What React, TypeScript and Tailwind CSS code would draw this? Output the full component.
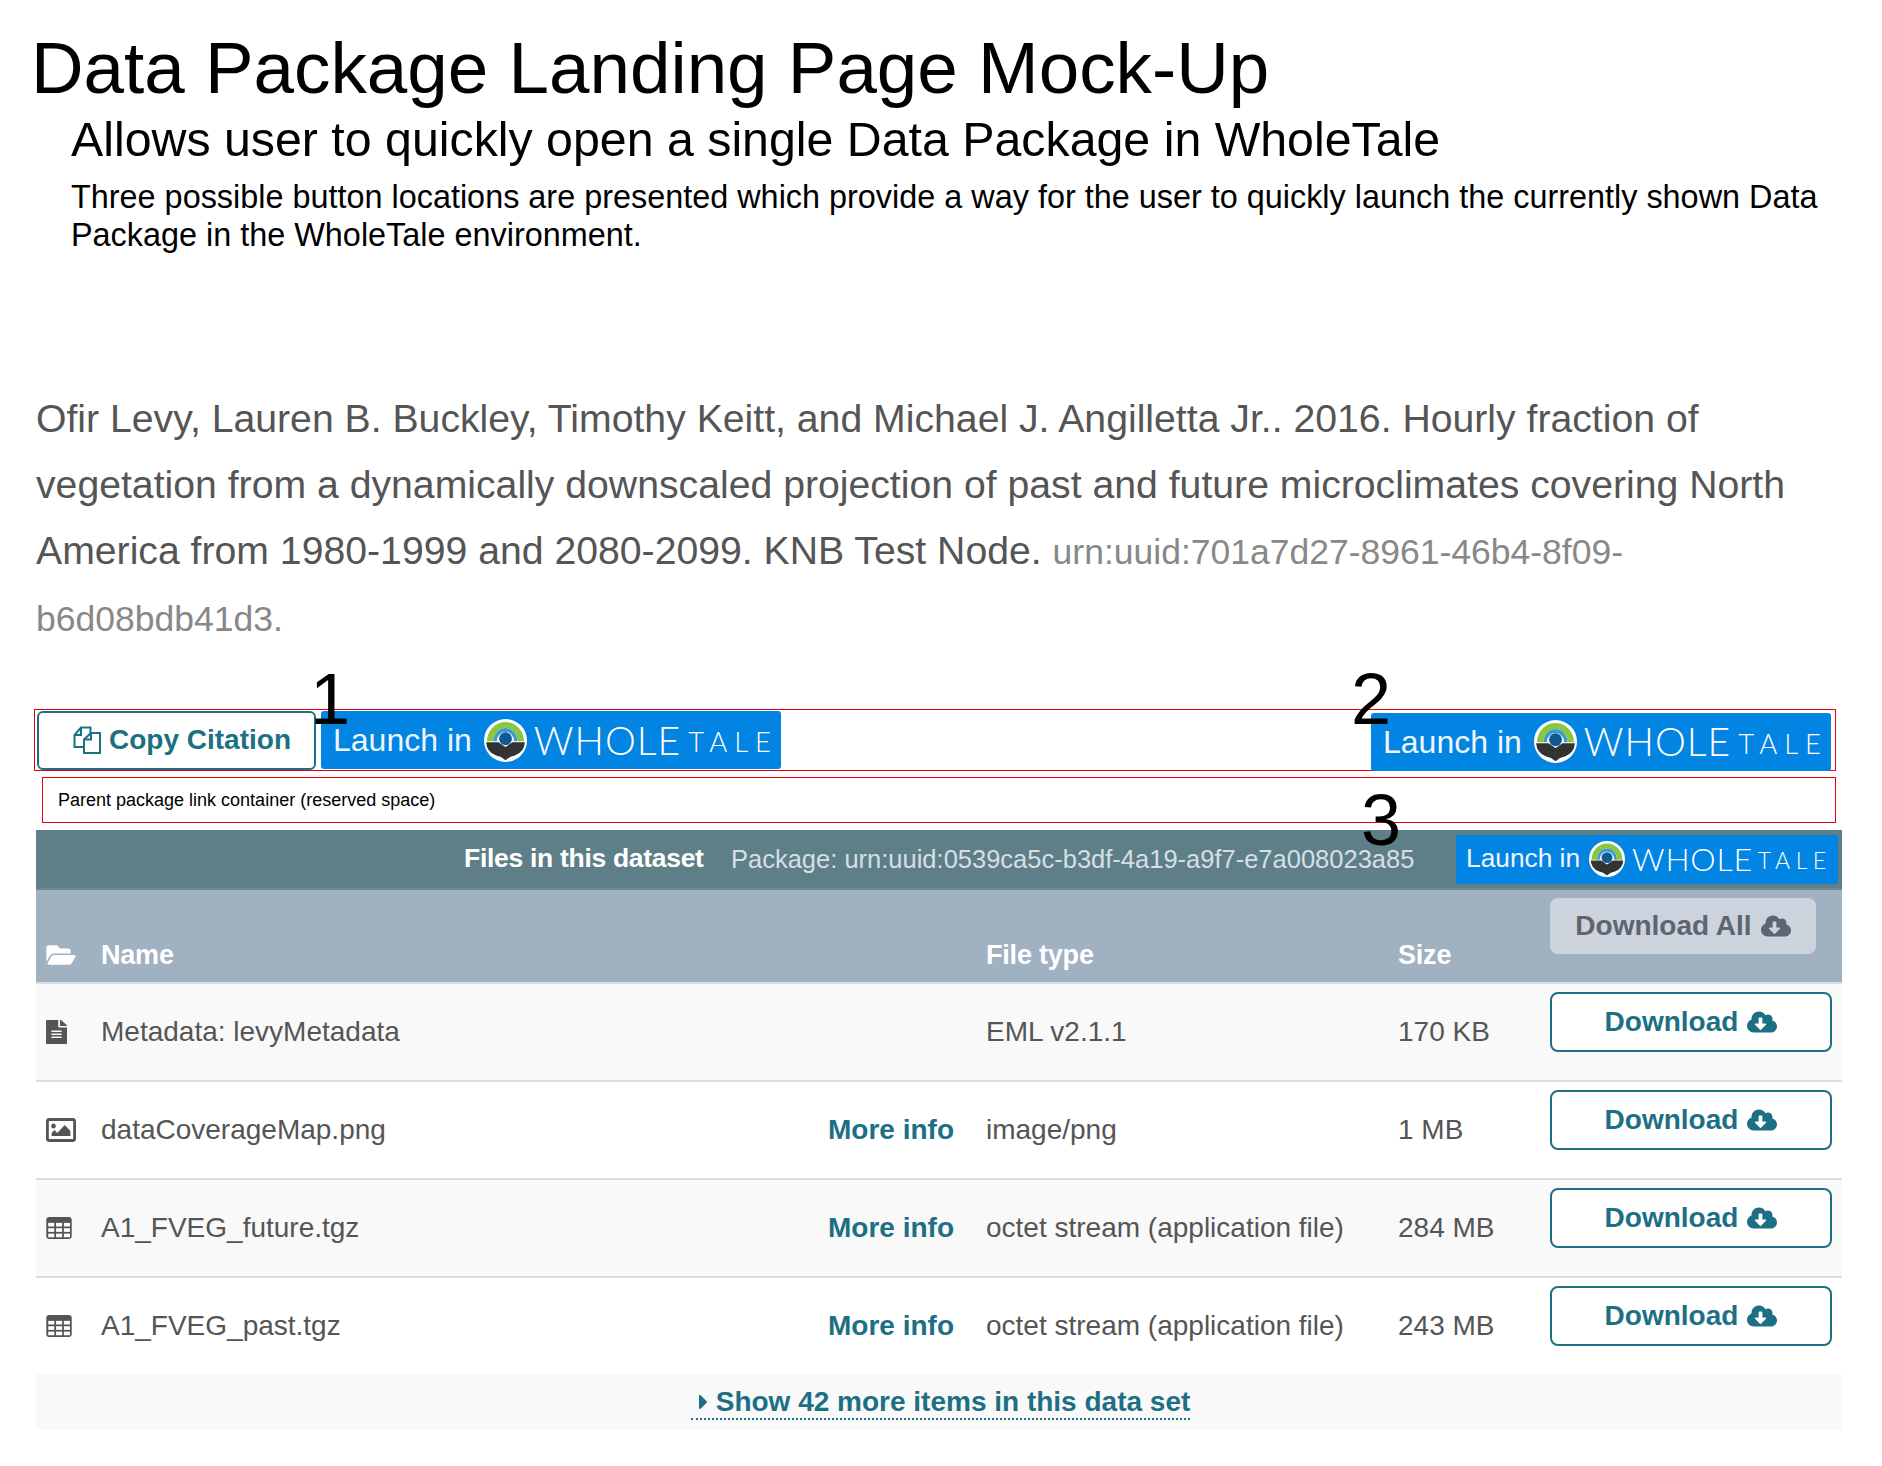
import { FaFolderOpen, FaFileAlt, FaRegImage, FaCloudDownloadAlt, FaCaretRight } from "react-icons/fa";

function Logo({ className }: { className: string }) {
  return (
    <svg viewBox="0 0 100 100" className={className}>
      <circle cx="50" cy="50" r="50" fill="#fff" />
      <path d="M7 52 A43 45 0 0 1 93 52 L78 52 A28 31 0 0 0 22 52 Z" fill="#8cc63f" />
      <path d="M22 52 A28 31 0 0 1 78 52 L70 52 A20 22 0 0 0 30 52 Z" fill="#3d9bd0" />
      <path d="M30 52 A20 22 0 0 1 70 52 L66 52 A16 17 0 0 0 34 52 Z" fill="#e2f1f8" />
      <circle cx="50" cy="46" r="15" fill="#0f5a94" />
      <path d="M5 54 L34 54 Q42 60 50 65 Q58 60 66 54 L95 54 Q94 76 72 85 Q60 87 50 96 Q40 87 28 85 Q6 76 5 54 Z" fill="#333" />
    </svg>
  );
}

function TableIcon() {
  const cells = [];
  for (const y of [6, 11.5, 17]) for (const x of [2, 10, 18]) cells.push(<rect key={`${x}-${y}`} x={x} y={y} width="6.2" height="3.7" fill="#fff" />);
  return (
    <svg viewBox="0 0 26 22.5" className="h-[22px] w-[26px]">
      <rect width="26" height="22.5" rx="3" fill="#555" />
      {cells}
    </svg>
  );
}

function CopyIcon() {
  return (
    <svg viewBox="0 0 28 28" className="h-[28px] w-[28px]" fill="none" stroke="#1d6f84" strokeWidth="2">
      <path d="M11 21 H1.5 V9 L8 1.5 H17.5 V7" />
      <path d="M8 1.5 V9 H1.5" />
      <path d="M18 7 H27 V27 H11 V13.5 Z" />
      <path d="M18 7 V13.5 H11" />
    </svg>
  );
}

function Launch({ small, className }: { small?: boolean; className: string }) {
  return (
    <div className={`flex items-center whitespace-nowrap rounded-[3px] bg-[#0284e2] text-white ${className}`}>
      <span className={small ? "text-[26.3px] text-[#eef6fc]" : "text-[32px] text-[#eef6fc]"}>Launch in</span>
      <Logo className={small ? "ml-[9px] h-[36px] w-[36px]" : "ml-[12px] h-[43px] w-[43px]"} />
      <span className={small ? "ml-[7px] font-['Lato'] text-[32px] tracking-[0.8px] font-light" : "ml-[7px] font-['Lato'] text-[39px] tracking-[1px] font-light"}>WHOLE</span>
      <span className={small ? "ml-[5px] mt-[3px] font-['Lato'] text-[23px] font-light tracking-[5.5px]" : "ml-[7px] mt-[4px] font-['Lato'] text-[27.5px] font-light tracking-[7px]"}>TALE</span>
    </div>
  );
}

const rows = [
  { icon: <FaFileAlt className="h-[24px] w-[21px]" preserveAspectRatio="none" />, name: "Metadata: levyMetadata", more: false, type: "EML v2.1.1", size: "170 KB" },
  { icon: <FaRegImage className="h-[32px] w-[30px]" preserveAspectRatio="none" />, name: "dataCoverageMap.png", more: true, type: "image/png", size: "1 MB" },
  { icon: <TableIcon />, name: "A1_FVEG_future.tgz", more: true, type: "octet stream (application file)", size: "284 MB" },
  { icon: <TableIcon />, name: "A1_FVEG_past.tgz", more: true, type: "octet stream (application file)", size: "243 MB" },
];

export default function App() {
  return (
    <div className="relative h-[1466px] w-[1882px] overflow-hidden bg-white font-['Liberation_Sans',Arial,sans-serif] text-black">
      <h1 className="pl-[31px] pt-[25px] text-[72.8px] leading-[86px]">Data Package Landing Page Mock-Up</h1>
      <h2 className="pl-[71px] text-[48.3px] leading-[56px]">Allows user to quickly open a single Data Package in WholeTale</h2>
      <p className="mt-[11px] w-[1820px] pl-[71px] text-[32.4px] leading-[38px]">
        Three possible button locations are presented which provide a way for the user to quickly launch the currently shown Data Package in the WholeTale environment.
      </p>

      <p className="ml-[36px] mt-[132px] w-[1806px] text-[39.2px] leading-[66px] text-[#555]">
        Ofir Levy, Lauren B. Buckley, Timothy Keitt, and Michael J. Angilletta Jr.. 2016. Hourly fraction of vegetation from a dynamically downscaled projection of past and future microclimates covering North America from 1980-1999 and 2080-2099. KNB Test Node.{" "}
        <span className="text-[35.5px] text-[#888]">urn:uuid:701a7d27-8961-46b4-8f09-b6d08bdb41d3.</span>
      </p>

      <div className="ml-[34px] mt-[57px] flex h-[62px] w-[1802px] items-center justify-between border border-[#e8000d]">
        <div className="flex items-center">
          <div className="ml-[2px] flex h-[59px] w-[279px] items-center gap-[8px] rounded-[6px] border-2 border-[#1d6f84] bg-white pl-[34px] text-[28px] font-bold text-[#1d6f84]">
            <CopyIcon />
            Copy Citation
          </div>
          <Launch className="ml-[5px] h-[58px] w-[460px] pl-[12px]" />
        </div>
        <Launch className="mr-[4px] mt-[3px] h-[58px] w-[460px] pl-[12px]" />
      </div>

      <div className="ml-[42px] mt-[6px] flex h-[46px] w-[1794px] items-center border border-[#e8000d] pl-[15px] text-[18px]">
        Parent package link container (reserved space)
      </div>

      <div className="ml-[36px] mt-[7px] w-[1806px]">
        <div className="flex h-[60px] items-center whitespace-nowrap border-b-2 border-[#6b8790] bg-[#5f7f88] pl-[428px]">
          <span className="w-[239px] text-[26.5px] font-bold tracking-[-0.3px] text-white">Files in this dataset</span>
          <span className="ml-[28px] w-[684px] text-[25.5px] text-[#d5dfe4]">Package: urn:uuid:0539ca5c-b3df-4a19-a9f7-e7a008023a85</span>
          <Launch small className="ml-[41px] h-[49px] w-[382px] pl-[10px]" />
        </div>

        <div className="relative flex h-[94px] items-end border-b-2 border-[#ddd] bg-[#a0b1c2] pb-[11px] text-[27px] font-bold leading-[32px] tracking-[-0.2px] text-white">
          <FaFolderOpen className="mb-[3px] ml-[10px] h-[26px] w-[30px]" />
          <span className="ml-[25px] w-[885px]">Name</span>
          <span className="w-[412px]">File type</span>
          <span>Size</span>
          <div className="absolute left-[1514px] top-[8px] flex h-[56px] w-[266px] items-center justify-center gap-[9px] rounded-[8px] bg-[#cdd3dd] text-[28px] tracking-normal text-[#5e6470]">
            Download All
            <FaCloudDownloadAlt className="h-[26px] w-[30px]" />
          </div>
        </div>

        {rows.map((r, i) => (
          <div key={r.name} className={`flex text-[28px] text-[#555] ${i === 3 ? "h-[96px]" : "h-[98px] border-b-2 border-[#ddd]"} ${i % 2 === 0 ? "bg-[#f9f9f9]" : "bg-white"}`}>
            <div className="flex w-[65px] items-center pl-[10px]">{r.icon}</div>
            <div className="flex w-[853px] items-center justify-between">
              <span>{r.name}</span>
              {r.more && <span className="font-bold text-[#1d6f84]">More info</span>}
            </div>
            <div className="ml-[32px] flex w-[412px] items-center">{r.type}</div>
            <div className="flex w-[152px] items-center">{r.size}</div>
            <div className="mt-[8px] flex h-[60px] w-[282px] items-center justify-center gap-[9px] rounded-[8px] border-2 border-[#1d6f84] bg-white font-bold text-[#1d6f84]">
              Download
              <FaCloudDownloadAlt className="h-[26px] w-[30px]" />
            </div>
          </div>
        ))}

        <div className="flex h-[56px] justify-center bg-[#f9f9f9] text-[28px] font-bold text-[#1d6f84]">
          <span className="ml-[3px] flex h-[46px] items-center border-b-2 border-dotted border-[#1d6f84] pl-[8px] pt-[11px]">
            <FaCaretRight className="mr-[8px] h-[24px] w-[9px]" />
            Show 42 more items in this data set
          </span>
        </div>
      </div>

      <span className="absolute left-[310px] top-[656px] text-[72px] leading-[86px]">1</span>
      <span className="absolute left-[1351px] top-[656px] text-[72px] leading-[86px]">2</span>
      <span className="absolute left-[1361px] top-[777px] text-[72px] leading-[86px]">3</span>
    </div>
  );
}
